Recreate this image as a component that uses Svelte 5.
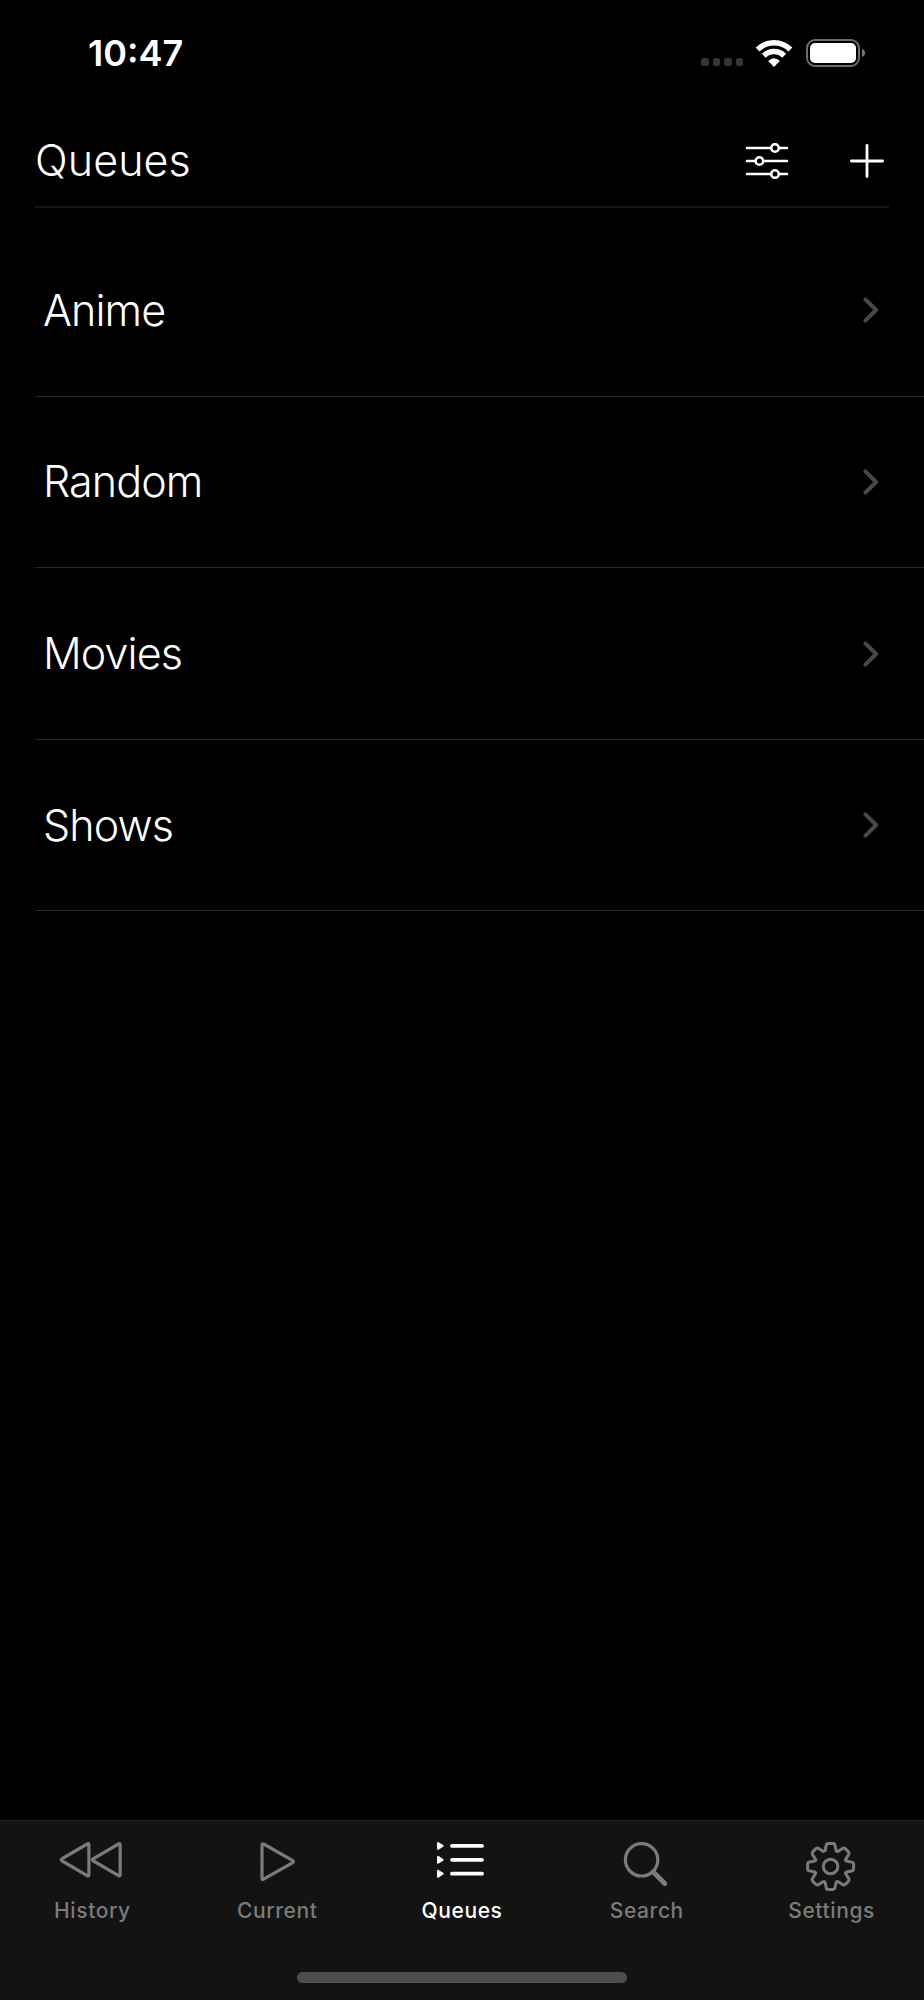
<script>
  const queues = ['Anime', 'Random', 'Movies', 'Shows'];
  const tabs = ['History', 'Current', 'Queues', 'Search', 'Settings'];

  let active = 'Queues';

  // one tooth, repeated every 45 degrees
  const tooth = [[-5.5, -15.8], [-4.4, -21.2], [-2.4, -23], [2.4, -23], [4.4, -21.2], [5.5, -15.8]];

  function gear(cx, cy) {
    const parts = [];
    for (let i = 0; i < 8; i++) {
      const a = (i * Math.PI) / 4;
      const p = tooth.map(([x, y]) => {
        const px = cx + x * Math.cos(a) - y * Math.sin(a);
        const py = cy + x * Math.sin(a) + y * Math.cos(a);
        return `${px.toFixed(2)} ${py.toFixed(2)}`;
      });
      parts.push(`${i ? 'A1.4 1.4 0 0 0' : 'M'} ${p[0]} L${p[1]} A2.2 2.2 0 0 1 ${p[2]} L${p[3]} A2.2 2.2 0 0 1 ${p[4]} L${p[5]}`);
    }
    return parts.join(' ') + 'Z';
  }
</script>

<div class="screen">
  <div class="status">
    <span class="time">10:47</span>
    <div class="indicators">
      <div class="dots"><i></i><i></i><i></i><i></i></div>
      <svg class="wifi" width="38" height="28" viewBox="0 0 38 28">
        <path d="M2.6 10.6A23.2 23.2 0 0 1 35.4 10.6M8.8 16.8A14.4 14.4 0 0 1 29.2 16.8" fill="none" stroke="#fff" stroke-width="5.6" />
        <path d="M19 28L13.2 22Q19 16.6 24.8 22Z" fill="#fff" />
      </svg>
      <svg width="60" height="28" viewBox="0 0 60 28">
        <rect x="1" y="1" width="52" height="26" rx="8" fill="none" stroke="#6c6c6c" stroke-width="2" />
        <rect x="4" y="4" width="46" height="20" rx="5" fill="#fff" />
        <path d="M56 10Q59 11.2 59 14T56 18Z" fill="#7b7b7b" />
      </svg>
    </div>
  </div>

  <header>
    <h1>Queues</h1>
    <div class="actions">
      <button aria-label="Filter">
        <svg width="44" height="36" viewBox="0 0 44 36" stroke="#fff" stroke-width="2.6" stroke-linecap="round">
          <path d="M2 5H42M2 18H42M2 31H42" />
          <circle cx="30" cy="5" r="3.8" fill="#000" />
          <circle cx="14.4" cy="18" r="3.8" fill="#000" />
          <circle cx="30" cy="31" r="3.8" fill="#000" />
        </svg>
      </button>
      <button aria-label="Add">
        <svg width="36" height="36" viewBox="0 0 36 36" stroke="#fff" stroke-width="2.8" stroke-linecap="round">
          <path d="M2.4 18H33.6M18 2.4V33.6" />
        </svg>
      </button>
    </div>
  </header>

  <ul>
    {#each queues as queue}
      <li>
        <span>{queue}</span>
        <svg width="18" height="28" viewBox="0 0 18 28" fill="none" stroke="#48484a" stroke-width="4" stroke-linecap="round" stroke-linejoin="round">
          <path d="M3.4 3.4L14.2 14L3.4 24.6" />
        </svg>
      </li>
    {/each}
  </ul>

  <nav>
    <div class="tabs">
      {#each tabs as tab}
        <button class:active={tab === active} on:click={() => (active = tab)}>
          <svg width="80" height="60" viewBox="0 0 80 60" fill="none" stroke="currentColor" stroke-width="3.2" stroke-linecap="round" stroke-linejoin="round">
            {#if tab === 'History'}
              <path d="M36.9 9.8V39.8Q36.9 41.6 35.2 40.6L10.2 26Q8.2 24.8 10.2 23.6L35.2 9Q36.9 8 36.9 9.8Z" />
              <path d="M68.2 9.8V39.8Q68.2 41.6 66.5 40.6L41.5 26Q39.5 24.8 41.5 23.6L66.5 9Q68.2 8 68.2 9.8Z" />
            {:else if tab === 'Current'}
              <path d="M25 10V43.4Q25 45.2 26.6 44.2L55.4 27.8Q57.4 26.6 55.4 25.4L26.6 9Q25 8.2 25 10Z" />
            {:else if tab === 'Queues'}
              <path d="M30 10.9H60M30 24.8H60M30 38.7H60" stroke-width="3.8" />
              <path d="M16 8L20.6 10.9L16 13.8ZM16 21.9L20.6 24.8L16 27.7ZM16 35.8L20.6 38.7L16 41.6Z" fill="currentColor" stroke-width="2" />
            {:else if tab === 'Search'}
              <circle cx="34.6" cy="24.8" r="16.2" />
              <path d="M46.5 37.2L57.8 48.5" stroke-width="4.8" />
            {:else}
              <path d={gear(38.6, 31.5)} stroke-width="3" />
              <circle cx="38.6" cy="31.5" r="7.3" stroke-width="3" />
            {/if}
          </svg>
          <span>{tab}</span>
        </button>
      {/each}
    </div>
    <div class="home"></div>
  </nav>
</div>

<style>
  :global(body) {
    background: #000;
  }

  .screen {
    display: flex;
    flex-direction: column;
    width: 924px;
    height: 2000px;
    background: #000;
    color: #fff;
    font-family: Inter, 'Liberation Sans', sans-serif;
    overflow: hidden;
  }

  .status {
    display: flex;
    justify-content: space-between;
    align-items: center;
    box-sizing: border-box;
    height: 104px;
    padding: 1px 58px 0 88px;
  }

  .time {
    font-size: 36px;
    font-weight: 600;
    line-height: 40px;
  }

  .indicators {
    display: flex;
    align-items: center;
  }

  .dots {
    display: flex;
    gap: 4px;
    padding-top: 19px;
  }

  .dots i {
    width: 7.5px;
    height: 8px;
    border-radius: 2.5px;
    background: #363636;
  }

  .wifi {
    margin: 0 13px 0 12px;
  }

  header {
    display: flex;
    justify-content: space-between;
    align-items: center;
    box-sizing: border-box;
    height: 104px;
    margin: 0 35px;
    padding-top: 12px;
    border-bottom: 2px solid #171717;
  }

  h1 {
    margin: 0 0 2px;
    font-size: 43px;
    font-weight: 300;
    line-height: 52px;
    letter-spacing: 0.1px;
  }

  .actions {
    display: flex;
    gap: 60px;
    padding-right: 4px;
  }

  button {
    margin: 0;
    padding: 0;
    border: 0;
    background: none;
    color: inherit;
    font: inherit;
  }

  svg {
    display: block;
  }

  ul {
    flex: 1;
    margin: 0;
    padding: 17.1px 0 0 35px;
    list-style: none;
  }

  li {
    display: flex;
    justify-content: space-between;
    align-items: center;
    box-sizing: border-box;
    height: 171.6px;
    padding: 0 44px 0 8px;
    border-bottom: 1px solid #262626;
    font-size: 43px;
    font-weight: 300;
    letter-spacing: -0.9px;
  }

  li span {
    padding-bottom: 1px;
  }

  nav {
    box-sizing: border-box;
    height: 180px;
    border-top: 1px solid #262626;
    background: #131313;
  }

  .tabs {
    display: grid;
    grid-template-columns: repeat(5, 1fr);
    height: 151px;
    padding-top: 14px;
    box-sizing: border-box;
  }

  .tabs button {
    display: flex;
    flex-direction: column;
    align-items: center;
    color: #7b7b7b;
    font-size: 21px;
    font-weight: 500;
    line-height: 32px;
    letter-spacing: 0.6px;
  }

  .tabs .active {
    color: #fff;
  }

  .home {
    width: 330px;
    height: 11px;
    margin: 0 auto;
    border-radius: 6px;
    background: #4d4d4d;
  }
</style>
